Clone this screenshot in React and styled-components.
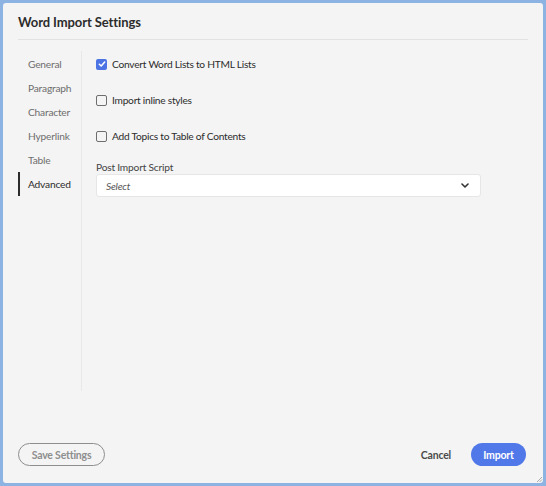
import styled, { createGlobalStyle } from "styled-components";

const GlobalStyle = createGlobalStyle`
  html, body {
    margin: 0;
    padding: 0;
    background: #8db3e3;
    font-family: Lato, "Open Sans", sans-serif;
  }
`;

const StyledDialog = styled.div`
  position: relative;
  box-sizing: border-box;
  margin: 3px;
  height: 480px;
  background: #f4f4f4;
  border-radius: 3px;
  display: flex;
  flex-direction: column;
`;
const StyledHeader = styled.div`
  margin: 0 15px;
  height: 37px;
  padding-top: 2px;
  box-sizing: border-box;
  border-bottom: 1px solid #e2e2e2;
  display: flex;
  align-items: center;
`;
const StyledTitle = styled.h1`
  margin: 0;
  font-size: 13px;
  font-weight: bold;
  letter-spacing: -0.1px;
  color: #2c2c2c;
`;
const StyledBody = styled.div`
  flex: 1;
  display: flex;
  padding: 11px 0 0 15px;
`;
const StyledSidebar = styled.div`
  width: 63px;
  border-right: 1px solid #e8e8e8;
  padding-top: 1px;
`;
const StyledNavItem = styled.div`
  height: 24px;
  display: flex;
  align-items: center;
  padding-left: 8px;
  font-size: 10.2px;
  letter-spacing: -0.2px;
  color: ${(props) => (props.$active ? "#2c2c2c" : "#6e6e6e")};
  border-left: 2px solid ${(props) => (props.$active ? "#2c2c2c" : "transparent")};
`;
const StyledContent = styled.div`
  padding: 1px 0 0 14px;
  display: flex;
  flex-direction: column;
  gap: 12px;
`;
const StyledRow = styled.label`
  height: 24px;
  display: flex;
  align-items: center;
  gap: 5px;
  font-size: 10.2px;
  letter-spacing: -0.25px;
  color: #2c2c2c;
`;
const StyledBox = styled.span`
  box-sizing: border-box;
  width: 11px;
  height: 11px;
  border-radius: 2px;
  display: flex;
  align-items: center;
  justify-content: center;
  ${(props) =>
    props.$checked
      ? `background:#4b73e3; border:none;`
      : `background:transparent; border:1.5px solid #6e6e6e;`}
`;
const StyledField = styled.div`
  display: flex;
  flex-direction: column;
`;
const StyledFieldLabel = styled.div`
  height: 14px;
  font-size: 10.2px;
  letter-spacing: -0.2px;
  color: #444;
  display: flex;
  align-items: center;
`;
const StyledSelect = styled.div`
  box-sizing: border-box;
  width: 385px;
  height: 23px;
  background: #fff;
  border: 1px solid #e6e6e6;
  border-radius: 3px;
  display: flex;
  align-items: center;
  justify-content: space-between;
  padding: 0 11px 0 9px;
  font-size: 10.2px;
  letter-spacing: -0.2px;
  font-style: italic;
  color: #555;
`;
const StyledFooter = styled.div`
  height: 92px;
  box-sizing: border-box;
  display: flex;
  align-items: flex-end;
  padding: 0 17px 17px 15px;
  gap: 8px;
`;
const StyledButton = styled.button`
  height: 23px;
  border-radius: 12px;
  font-family: inherit;
  font-size: 10.5px;
  letter-spacing: -0.2px;
  font-weight: bold;
  padding: 0 12px;
  white-space: nowrap;
  cursor: pointer;
  ${(props) =>
    props.$variant === "outline" &&
    `background:transparent; border:1.5px solid #8e8e8e; color:#8e8e8e; margin-right:auto; width:87px;`}
  ${(props) =>
    props.$variant === "quiet" &&
    `background:transparent; border:none; color:#4b4b4b;`}
  ${(props) =>
    props.$variant === "primary" &&
    `background:#5078e8; border:none; color:#fff; width:55px;`}
`;
const StyledGrip = styled.svg`
  position: absolute;
  right: 0;
  bottom: 0;
`;

const navItems = ["General", "Paragraph", "Character", "Hyperlink", "Table", "Advanced"];
const options = [
  { label: "Convert Word Lists to HTML Lists", checked: true },
  { label: "Import inline styles", checked: false },
  { label: "Add Topics to Table of Contents", checked: false },
];

export default function App() {
  return (
    <>
      <GlobalStyle />
      <StyledDialog>
        <StyledHeader>
          <StyledTitle>Word Import Settings</StyledTitle>
        </StyledHeader>
        <StyledBody>
          <StyledSidebar>
            {navItems.map((item) => (
              <StyledNavItem key={item} $active={item === "Advanced"}>
                {item}
              </StyledNavItem>
            ))}
          </StyledSidebar>
          <StyledContent>
            {options.map((opt) => (
              <StyledRow key={opt.label}>
                <StyledBox $checked={opt.checked}>
                  {opt.checked && (
                    <svg width="8" height="8" viewBox="0 0 8 8">
                      <path d="M1.3 4.2 L3.2 6 L6.7 2" fill="none" stroke="#fff" strokeWidth="1.5" strokeLinecap="round" strokeLinejoin="round" />
                    </svg>
                  )}
                </StyledBox>
                {opt.label}
              </StyledRow>
            ))}
            <StyledField>
              <StyledFieldLabel>Post Import Script</StyledFieldLabel>
              <StyledSelect>
                Select
                <svg width="8" height="5" viewBox="0 0 8 5">
                  <path d="M1 1 L4 4 L7 1" fill="none" stroke="#333" strokeWidth="1.6" strokeLinecap="round" strokeLinejoin="round" />
                </svg>
              </StyledSelect>
            </StyledField>
          </StyledContent>
        </StyledBody>
        <StyledFooter>
          <StyledButton $variant="outline">Save Settings</StyledButton>
          <StyledButton $variant="quiet">Cancel</StyledButton>
          <StyledButton $variant="primary">Import</StyledButton>
        </StyledFooter>
        <StyledGrip width="7" height="7" viewBox="0 0 7 7">
          <path d="M6 1 L1 6 M6 3.5 L3.5 6" stroke="#999" strokeWidth="0.8" />
        </StyledGrip>
      </StyledDialog>
    </>
  );
}
